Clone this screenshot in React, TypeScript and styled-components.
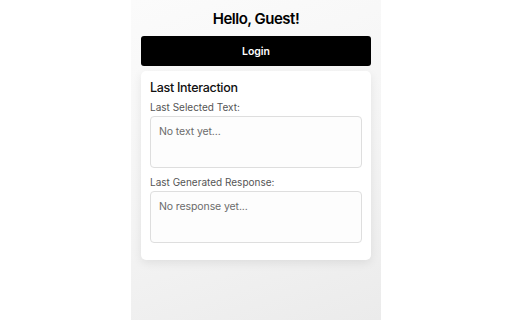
import React from "react";
import styled, { createGlobalStyle } from "styled-components";

const GlobalStyle = createGlobalStyle`
  html, body {
    margin: 0;
    padding: 0;
    background: #ffffff;
  }
  body {
    font-family: Inter, "Noto Sans", "Liberation Sans", sans-serif;
    color: #111;
  }
`;

export default function App() {
  return (
    <>
      <GlobalStyle />
      <Page>
        <Popup>
          <Greeting>Hello, Guest!</Greeting>
          <LoginButton>Login</LoginButton>
          <Card>
            <CardTitle>Last Interaction</CardTitle>
            <Field>
              <FieldLabel>Last Selected Text:</FieldLabel>
              <TextBox placeholder="No text yet..." readOnly />
            </Field>
            <Field>
              <FieldLabel>Last Generated Response:</FieldLabel>
              <TextBox placeholder="No response yet..." readOnly />
            </Field>
          </Card>
        </Popup>
      </Page>
    </>
  );
}

const Page = styled.div`
  display: flex;
  justify-content: center;
  min-height: 320px;
`;

const Popup = styled.div`
  box-sizing: border-box;
  width: 250px;
  min-height: 320px;
  padding: 9px 10px 10px;
  display: flex;
  flex-direction: column;
  background: linear-gradient(160deg, #fbfbfb 0%, #f4f4f4 55%, #ebebeb 100%);
`;

const Greeting = styled.h1`
  margin: 0 0 7px;
  font-size: 15px;
  line-height: 20px;
  font-weight: 600;
  letter-spacing: -0.5px;
  text-align: center;
  color: #000;
`;

const LoginButton = styled.button`
  height: 30px;
  border: none;
  border-radius: 3px;
  background: #000;
  color: #fff;
  font-family: inherit;
  font-size: 10.5px;
  font-weight: 600;
  cursor: pointer;
`;

const Card = styled.div`
  margin-top: 5px;
  padding: 9px 9px 9px;
  background: #fff;
  border-radius: 5px;
  box-shadow: 0 3px 10px rgba(0, 0, 0, 0.08);
  display: flex;
  flex-direction: column;
`;

const CardTitle = styled.h2`
  margin: 0 0 5px;
  font-size: 12.5px;
  line-height: 16px;
  font-weight: 500;
  letter-spacing: -0.3px;
  color: #111;
`;

const Field = styled.div`
  display: flex;
  flex-direction: column;
  gap: 2px;
  margin-bottom: 8px;
`;

const FieldLabel = styled.label`
  font-size: 10px;
  line-height: 13px;
  color: #555;
`;

const TextBox = styled.textarea`
  box-sizing: border-box;
  height: 52px;
  padding: 8px;
  resize: none;
  border: 1px solid #dedede;
  border-radius: 4px;
  background: #fdfdfd;
  font-family: inherit;
  font-size: 10.5px;
  line-height: 14px;
  letter-spacing: -0.1px;
  color: #333;
  outline: none;

  &::placeholder {
    color: #6b6b6b;
  }
`;
